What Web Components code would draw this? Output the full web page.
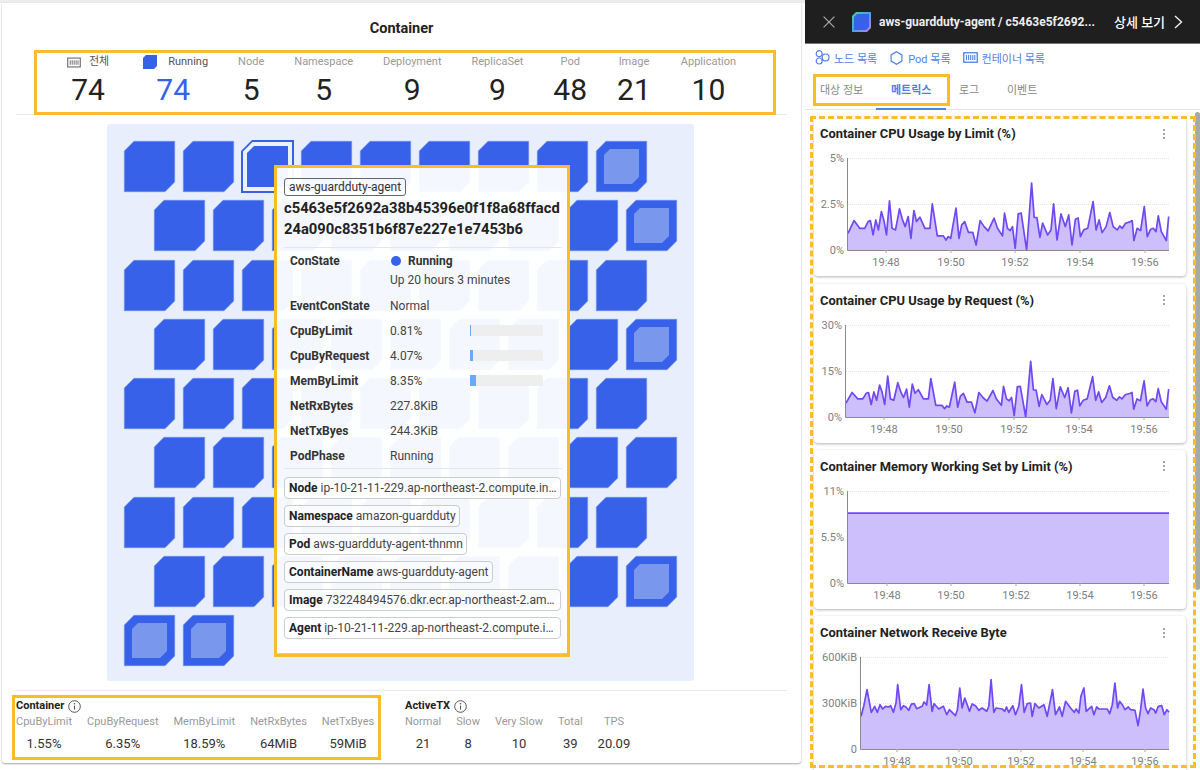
<!DOCTYPE html>
<html lang="ko">
<head>
<meta charset="utf-8">
<title>Container</title>
<style>
  html, body { margin: 0; height: 770px; overflow: hidden; background: #fff; }
  body { font-family: Roboto, "Noto Sans CJK KR", sans-serif; color: #222; display: flex; }
</style>
</head>
<body>
<overview-panel></overview-panel>
<detail-panel></detail-panel>

<script>
const ORANGE = "#fbbd27";
const BLUE = "#3661e8";

const barsIcon = (color, w = 15, h = 11) => `<svg width="${w}" height="${h}" viewBox="0 0 15 11" fill="none">
  <rect x=".75" y=".75" width="13.5" height="9.5" stroke="${color}" stroke-width="1.3"/>
  <path d="M3.5 3v5M5.6 3v5M7.7 3v5M9.8 3v5M11.8 3v5" stroke="${color}" stroke-width="1.1"/>
</svg>`;

const infoIcon = `<svg width="13" height="13" viewBox="0 0 13 13" fill="none">
  <circle cx="6.5" cy="6.5" r="5.8" stroke="#555" stroke-width="1"/>
  <path d="M6.5 5.6v4" stroke="#555" stroke-width="1.1"/><circle cx="6.5" cy="3.7" r=".8" fill="#555"/>
</svg>`;

// one stat: label on top, large number below
class StatItem extends HTMLElement {
  constructor() {
    super();
    this.attachShadow({ mode: "open" }).innerHTML = `<style>
      :host { display: flex; flex-direction: column; align-items: center; }
      .label { display: flex; align-items: center; gap: 8px; height: 14px; font-size: 11px; line-height: 14px; color: var(--label, #999); white-space: nowrap; }
      .value { font-size: 30px; line-height: 36px; margin: 3px var(--shift, 0) 0 0; color: var(--num, #222); }
    </style>
    <div class="label"><slot name="icon"></slot><slot></slot></div>
    <div class="value">${this.getAttribute("value")}</div>`;
  }
}
customElements.define("stat-item", StatItem);

// small stat used in the footer
class MiniStat extends HTMLElement {
  constructor() {
    super();
    this.attachShadow({ mode: "open" }).innerHTML = `<style>
      :host { display: flex; flex-direction: column; align-items: center; }
      .label { font-size: 11px; line-height: 14px; color: #999; white-space: nowrap; }
      .value { font-size: 13px; line-height: 16px; margin-top: 7px; color: #333; white-space: nowrap; }
    </style>
    <div class="label"><slot></slot></div>
    <div class="value">${this.getAttribute("value")}</div>`;
  }
}
customElements.define("mini-stat", MiniStat);

class HexTile extends HTMLElement {
  constructor() {
    super();
    const kind = this.getAttribute("kind") || "solid";
    let inner = "";
    if (kind === "light")
      inner = `<polygon points="14,8 43,8 43,36 36,43 8,43 8,14" fill="#7a97ee"/>`;
    if (kind === "selected")
      inner = `<polygon points="10,-1 52,-1 52,41 41,52 -1,52 -1,10" fill="${BLUE}"/>
        <polygon points="10.5,1 50,1 50,50 1,50 1,10.5" fill="#eaf1fb"/>
        <polygon points="12,5 46,5 46,46 5,46 5,12" fill="${BLUE}"/>`;
    this.attachShadow({ mode: "open" }).innerHTML = `<style>
      :host { display: block; width: 51px; height: 51px; flex: none; }
      svg { display: block; overflow: visible; }
    </style>
    <svg width="51" height="51" viewBox="0 0 51 51">
      ${kind === "selected" ? "" : `<polygon points="10,.3 50.7,.3 50.7,41 41,50.7 .3,50.7 .3,10" fill="${BLUE}" stroke="#6f8ff0" stroke-width=".6"/>`}
      ${inner}
    </svg>`;
  }
}
customElements.define("hex-tile", HexTile);

class HexMap extends HTMLElement {
  constructor() {
    super();
    const lightRows = [0, 1, 3, 7];
    let rows = "";
    for (let r = 0; r < 9; r++) {
      const count = r === 8 ? 2 : 9;
      let tiles = "";
      for (let c = 0; c < count; c++) {
        let kind = "solid";
        if (r === 0 && c === 2) kind = "selected";
        if (r === 8 || (c === 8 && lightRows.includes(r))) kind = "light";
        tiles += `<hex-tile kind="${kind}"></hex-tile>`;
      }
      rows += `<div class="row${r % 2 ? " odd" : ""}">${tiles}</div>`;
    }
    this.attachShadow({ mode: "open" }).innerHTML = `<style>
      :host { display: block; position: relative; width: 587px; height: 557px; box-sizing: border-box; padding: 17px; background: #e8eefb; border-radius: 3px; }
      .rows { display: flex; flex-direction: column; gap: 8.3px; }
      .row { display: flex; gap: 8px; }
      .odd { padding-left: 29.5px; }
      ::slotted(*) { position: absolute; left: 167px; top: 41px; }
    </style>
    <div class="rows">${rows}</div>
    <slot></slot>`;
  }
}
customElements.define("hex-map", HexMap);

class InfoChip extends HTMLElement {
  constructor() {
    super();
    this.attachShadow({ mode: "open" }).innerHTML = `<style>
      :host { display: block; width: fit-content; box-sizing: border-box; height: 22px; padding: 0 3.5px 0 4px; border: 1px solid #ccc; border-bottom-width: 1.5px; border-radius: 4px; font-size: 12px; line-height: 20px; color: #444; background: #fff8; white-space: nowrap; }
      :host([full]) { width: 277px; }
      b { color: #222; font-weight: 700; }
    </style><b>${this.getAttribute("label")}</b> <slot></slot>`;
  }
}
customElements.define("info-chip", InfoChip);

class InfoRow extends HTMLElement {
  constructor() {
    super();
    const bar = this.getAttribute("bar");
    this.attachShadow({ mode: "open" }).innerHTML = `<style>
      :host { display: flex; align-items: center; height: 25px; font-size: 12px; color: #444; padding-left: 6px; }
      .k { width: 100px; font-weight: 700; color: #333; flex: none; }
      .v { width: 80px; flex: none; }
      .bar { width: 73px; height: 11px; background: #eee; }
      .bar i { display: block; height: 100%; background: #6aa9f5; }
    </style>
    <span class="k">${this.getAttribute("label")}</span><span class="v"><slot></slot></span>
    ${bar ? `<div class="bar"><i style="width:${bar}px"></i></div>` : ""}`;
  }
}
customElements.define("info-row", InfoRow);

class NodeTooltip extends HTMLElement {
  constructor() {
    super();
    this.attachShadow({ mode: "open" }).innerHTML = `<style>
      :host { display: block; width: 296px; height: 492px; box-sizing: border-box; border: 3px solid ${ORANGE}; }
      .box { box-sizing: border-box; height: 486px; padding: 8px 5px 0 7px; background: rgba(255,255,255,.95); border-bottom: 1px solid #ccc; }
      .tag { display: inline-block; font-size: 12px; line-height: 16px; padding: 0 4px; border: 1px solid #666; border-radius: 3px; color: #333; }
      .hash { font-size: 14.75px; font-weight: 700; line-height: 21px; color: #222; margin-top: 2px; height: 42px; white-space: nowrap; }
      hr { border: 0; border-top: 1px solid #e6e6e6; margin: 0; }
      .dot { display: inline-block; width: 10px; height: 10px; border-radius: 50%; background: ${BLUE}; margin: 0 7px 0 1px; vertical-align: -1px; }
      .sub { height: 20px; font-size: 12px; line-height: 20px; color: #444; padding-left: 106px; margin-top: -3px; }
      .chips { display: flex; flex-direction: column; gap: 6px; margin-top: 8px; }
      b { color: #333; }
    </style>
    <div class="box">
      <span class="tag">aws-guardduty-agent</span>
      <div class="hash">c5463e5f2692a38b45396e0f1f8a68ffacd<br>24a090c8351b6f87e227e1e7453b6</div>
      <hr style="margin-top:7px">
      <div class="rows">
        <info-row label="ConState"><span class="dot"></span><b>Running</b></info-row>
        <div class="sub">Up 20 hours 3 minutes</div>
        <info-row label="EventConState" style="margin-top:3px">Normal</info-row>
        <info-row label="CpuByLimit" bar="1">0.81%</info-row>
        <info-row label="CpuByRequest" bar="3">4.07%</info-row>
        <info-row label="MemByLimit" bar="6">8.35%</info-row>
        <info-row label="NetRxBytes">227.8KiB</info-row>
        <info-row label="NetTxByes">244.3KiB</info-row>
        <info-row label="PodPhase">Running</info-row>
      </div>
      <hr>
      <div class="chips">
        <info-chip label="Node" full>ip-10-21-11-229.ap-northeast-2.compute.in…</info-chip>
        <info-chip label="Namespace">amazon-guardduty</info-chip>
        <info-chip label="Pod">aws-guardduty-agent-thnmn</info-chip>
        <info-chip label="ContainerName">aws-guardduty-agent</info-chip>
        <info-chip label="Image" full>732248494576.dkr.ecr.ap-northeast-2.am…</info-chip>
        <info-chip label="Agent" full>ip-10-21-11-229.ap-northeast-2.compute.i…</info-chip>
      </div>
    </div>`;
  }
}
customElements.define("node-tooltip", NodeTooltip);

class OverviewPanel extends HTMLElement {
  constructor() {
    super();
    this.attachShadow({ mode: "open" }).innerHTML = `<style>
      :host { display: block; width: 805px; flex: none; height: 770px; box-sizing: border-box; border-top: 3px solid #ececec; padding: 0 4px 7px 2px; }
      .card { height: 760px; background: #fff; box-shadow: 0 1px 2px rgba(0,0,0,.35); border-radius: 0 0 3px 3px; display: flex; flex-direction: column; }
      h1 { margin: 0; height: 47px; font-size: 14.5px; font-weight: 700; line-height: 52px; text-align: center; color: #222; }
      .summary { position: relative; width: 742px; height: 65px; box-sizing: border-box; margin-left: 32px; border: 3px solid ${ORANGE}; display: flex; justify-content: center; gap: 30px; padding: 2px 7px 0 0; }
      .first { margin-right: 4px; }
      .run { --num: ${BLUE}; --label: #555; --shift: 5px; }
      .first { --label: #555; }
      hr { border: 0; border-top: 1px solid #e9e9e9; margin: 0 14px; }
      hex-map { margin: 9px 0 0 105px; }
      .foot { display: flex; margin-top: 4px; padding-left: 10px; gap: 25px; }
      .group { height: 65px; box-sizing: border-box; border: 3px solid transparent; padding-left: 1px; }
      .group.marked { border-color: ${ORANGE}; width: 369px; }
      .group h2 { margin: 0; font-size: 11px; line-height: 16px; font-weight: 700; color: #222; display: flex; align-items: center; gap: 4px; }
      .cols { display: flex; gap: 15px; margin-top: 1px; }
    </style>
    <div class="card">
      <h1>Container</h1>
      <div class="summary">
        <stat-item class="first" value="74"><span slot="icon" style="display:flex">${barsIcon("#777", 14, 11)}</span>전체</stat-item>
        <stat-item class="run" value="74"><svg slot="icon" width="14" height="14" viewBox="0 0 14 14"><polygon points="3,0 14,0 14,11 11,14 0,14 0,3" fill="${BLUE}"/></svg><span style="margin-left:3px">Running</span></stat-item>
        <stat-item value="5">Node</stat-item>
        <stat-item value="5">Namespace</stat-item>
        <stat-item value="9">Deployment</stat-item>
        <stat-item value="9">ReplicaSet</stat-item>
        <stat-item value="48">Pod</stat-item>
        <stat-item value="21">Image</stat-item>
        <stat-item value="10">Application</stat-item>
      </div>
      <hr style="margin-top:-1px">
      <hex-map><node-tooltip></node-tooltip></hex-map>
      <hr style="margin-top:9px">
      <div class="foot">
        <div class="group marked">
          <h2>Container ${infoIcon}</h2>
          <div class="cols">
            <mini-stat value="1.55%">CpuByLimit</mini-stat>
            <mini-stat value="6.35%">CpuByRequest</mini-stat>
            <mini-stat value="18.59%">MemByLimit</mini-stat>
            <mini-stat value="64MiB">NetRxBytes</mini-stat>
            <mini-stat value="59MiB">NetTxByes</mini-stat>
          </div>
        </div>
        <div class="group" style="margin-left:-5px">
          <h2>ActiveTX ${infoIcon}</h2>
          <div class="cols">
            <mini-stat value="21">Normal</mini-stat>
            <mini-stat value="8">Slow</mini-stat>
            <mini-stat value="10">Very Slow</mini-stat>
            <mini-stat value="39">Total</mini-stat>
            <mini-stat value="20.09">TPS</mini-stat>
          </div>
        </div>
      </div>
    </div>`;
  }
}
customElements.define("overview-panel", OverviewPanel);

// series read off the reference chart, [x, y] in its own pixels
const cpu = [[145,700],[163,662],[180,685],[195,685],[205,665],[212,662],[220,705],[228,660],[236,690],[245,635],[252,660],[260,705],[269,603],[277,685],[287,690],[299,627],[308,660],[316,680],[325,650],[333,715],[342,632],[350,665],[360,652],[375,685],[390,685],[397,612],[412,708],[430,708],[438,720],[445,710],[452,715],[468,625],[477,715],[485,675],[494,665],[505,697],[518,697],[528,735],[540,662],[552,680],[564,693],[582,655],[592,685],[607,708],[613,640],[622,685],[630,692],[637,680],[645,745],[654,642],[663,640],[679,750],[694,550],[702,653],[710,653],[719,712],[727,670],[742,705],[752,690],[760,612],[770,720],[782,642],[795,680],[805,645],[815,735],[825,658],[833,654],[840,710],[850,690],[862,685],[870,645],[878,605],[887,690],[896,660],[905,698],[917,680],[928,638],[938,680],[950,690],[958,678],[965,685],[975,670],[990,665],[995,662],[1000,722],[1010,685],[1020,692],[1031,620],[1040,710],[1050,688],[1058,685],[1066,695],[1073,648],[1082,695],[1097,722],[1104,650]];
const net = [[167,590],[175,560],[185,510],[198,578],[208,560],[216,578],[224,555],[232,568],[240,560],[250,562],[256,558],[264,578],[272,550],[277,495],[286,570],[294,558],[302,562],[310,572],[318,553],[326,552],[334,567],[350,560],[356,547],[364,556],[371,495],[380,575],[386,552],[400,568],[414,560],[424,585],[432,570],[450,588],[456,570],[463,505],[470,565],[478,535],[492,575],[500,553],[510,558],[520,572],[530,565],[544,575],[550,560],[557,480],[565,578],[572,565],[590,568],[598,575],[603,562],[610,578],[622,558],[630,585],[640,560],[648,495],[656,578],[665,552],[675,550],[680,590],[688,552],[700,565],[715,555],[725,590],[741,510],[750,585],[762,562],[770,590],[780,545],[795,565],[806,578],[812,568],[820,580],[826,530],[835,505],[842,575],[858,560],[865,585],[873,562],[880,568],[905,568],[912,582],[920,555],[928,490],[936,565],[942,545],[950,555],[958,570],[968,562],[975,570],[988,572],[997,618],[1005,570],[1012,508],[1020,565],[1027,582],[1035,565],[1045,570],[1050,580],[1058,560],[1068,558],[1076,585],[1084,570],[1090,578]];

const cpuLimit = cpu.map(([x, y]) => [(x - 145) / 960, (750 - y) / 275]);
const cpuRequest = cpuLimit.map(([x, y]) => [x, y * 0.833]);
const memLimit = [[0, 0.76], [1, 0.76]];
const netRx = net.map(([x, y]) => [(x - 167) / 923, (688 - y) / 276]);

const CHARTS = {
  cpuLimit: { points: cpuLimit, axis: 34, ticks: ["5%", "2.5%", "0%"], times: [72, 137, 201, 266, 331] },
  cpuRequest: { points: cpuRequest, axis: 32, ticks: ["30%", "15%", "0%"], times: [70, 135, 200, 265, 330] },
  memLimit: { points: memLimit, axis: 34, ticks: ["11%", "5.5%", "0%"], times: [73, 137, 202, 266, 330] },
  netRx: { points: netRx, axis: 47, ticks: ["600KiB", "300KiB", "0"], times: [83, 145, 207, 269, 331] },
};
const LABELS = ["19:48", "19:50", "19:52", "19:54", "19:56"];

class MetricCard extends HTMLElement {
  constructor() {
    super();
    const c = CHARTS[this.getAttribute("series")];
    const top = 12, bottom = 104, right = 355;
    const px = ([x, y]) => `${(c.axis + x * (right - c.axis)).toFixed(1)},${(bottom - y * (bottom - top)).toFixed(1)}`;
    const line = c.points.map(px).join(" ");
    const area = `${c.axis},${bottom} ${line} ${right},${bottom}`;
    const mid = (top + bottom) / 2;
    this.attachShadow({ mode: "open" }).innerHTML = `<style>
      :host { display: block; height: 159px; background: #fff; border-radius: 4px; box-shadow: 0 1px 3px rgba(0,0,0,.3); flex: none; }
      .head { display: flex; justify-content: space-between; align-items: center; height: 29px; padding: 4px 21px 0 6px; box-sizing: border-box; }
      h3 { margin: 0; font-size: 12.9px; font-weight: 700; color: #222; }
      .dots { display: flex; flex-direction: column; gap: 2px; }
      .dots i { width: 2px; height: 2px; border-radius: 50%; background: #888; }
      svg { display: block; }
      text { font-family: Roboto, sans-serif; font-size: 11px; fill: #808080; }
    </style>
    <div class="head"><h3>${this.getAttribute("heading")}</h3><div class="dots"><i></i><i></i><i></i></div></div>
    <svg width="372" height="130" viewBox="0 0 372 130">
      <path d="M${c.axis} ${top + .5}H${right}M${c.axis} ${mid + .5}H${right}" stroke="#e6e6e6" stroke-dasharray="1 1"/>
      <polygon points="${area}" fill="#cdbffb"/>
      <polyline points="${line}" fill="none" stroke="#7048f4" stroke-width="1.7" stroke-linejoin="round"/>
      <path d="M${c.axis - .5} ${top}V${bottom + .5}H${right}" fill="none" stroke="#8a8a8a"/>
      ${c.ticks.map((t, i) => `<text x="${c.axis - 4}" y="${[top, mid, bottom][i] + 3.5}" text-anchor="end">${t}</text>`).join("")}
      ${c.times.map((x, i) => `<path d="M${x} ${bottom}v3" stroke="#aaa"/><text x="${x}" y="120" text-anchor="middle">${LABELS[i]}</text>`).join("")}
    </svg>`;
  }
}
customElements.define("metric-card", MetricCard);

class DetailPanel extends HTMLElement {
  constructor() {
    super();
    const linkBlue = "#4f80e8";
    this.attachShadow({ mode: "open" }).innerHTML = `<style>
      :host { display: flex; flex-direction: column; width: 395px; height: 770px; flex: none; background: #fff; overflow: hidden; }
      header { height: 44px; flex: none; box-sizing: border-box; background: #1f1f1f; border-bottom: 1px solid #777; display: flex; align-items: center; color: #fff; padding-left: 18px; }
      .name { font-size: 12px; font-weight: 700; width: 218px; margin-left: 8px; white-space: nowrap; color: #eee; }
      .more { font-size: 13px; font-weight: 500; margin-left: 17px; }
      nav { display: flex; height: 30px; flex: none; align-items: center; padding: 0 0 3px 10px; font-size: 11px; color: ${linkBlue}; box-sizing: border-box; }
      nav a { display: flex; align-items: center; gap: 4px; margin-right: 13px; }
      .tabs { display: flex; height: 36px; flex: none; border-bottom: 1px solid #e6e6e6; box-sizing: border-box; position: relative; font-size: 11px; color: #888; }
      .marked { position: absolute; left: 8px; top: 0; width: 137px; height: 32px; box-sizing: border-box; border: 3px solid ${ORANGE}; }
      .tabs span { position: absolute; top: 9px; line-height: 16px; }
      .on { color: ${linkBlue}; font-weight: 700; }
      .under { position: absolute; left: 71px; width: 70px; height: 2px; bottom: -1px; background: ${linkBlue}; }
      .scroll { position: relative; flex: 1; }
      .dash { position: absolute; left: 5px; top: 6px; width: 386px; height: 652px; box-sizing: border-box; border: 3px dashed ${ORANGE}; pointer-events: none; z-index: 1; }
      .thumb { position: absolute; left: 390px; top: 2px; width: 5px; height: 478px; background: #a8a8a8; border-radius: 3px; }
      .cards { display: flex; flex-direction: column; gap: 7.3px; padding: 7.4px 0 0 9px; width: 372px; }
    </style>
    <header>
      <svg width="12" height="12" viewBox="0 0 12 12"><path d="M.6.6l10.8 10.8M11.4.6L.6 11.4" stroke="#aaa" stroke-width="1.2"/></svg>
      <svg width="19" height="20" viewBox="0 0 19 20" style="margin-left:17px">
        <defs><linearGradient id="g" x1="0" y1="0" x2="1" y2="1"><stop offset="0" stop-color="#4fd08a"/><stop offset=".5" stop-color="#4aa0e8"/><stop offset="1" stop-color="#c67be8"/></linearGradient></defs>
        <polygon points="4,0 19,0 19,16 15,20 0,20 0,4" fill="url(#g)"/>
        <polygon points="5,2 17,2 17,15 14,18 2,18 2,5" fill="${BLUE}"/>
      </svg>
      <div class="name">aws-guardduty-agent / c5463e5f2692...</div>
      <span class="more">상세 보기</span>
      <svg width="9" height="14" viewBox="0 0 9 14" style="margin-left:9px"><path d="M1 1l6.5 6L1 13" fill="none" stroke="#eee" stroke-width="1.4"/></svg>
    </header>
    <nav>
      <a><svg width="15" height="15" viewBox="0 0 15 15" fill="none" stroke="${linkBlue}" stroke-width="1.2"><circle cx="4.2" cy="3.7" r="3"/><circle cx="4.2" cy="11" r="3"/><circle cx="10.6" cy="7.4" r="3.4"/></svg>노드 목록</a>
      <a style="gap:5px;margin-right:12px"><svg width="13" height="14" viewBox="0 0 13 14" fill="none" stroke="${linkBlue}" stroke-width="1.2"><path d="M6.5.8l5.4 3.1v6.2l-5.4 3.1-5.4-3.1V3.9z"/></svg>Pod 목록</a>
      <a>${barsIcon(linkBlue)}컨테이너 목록</a>
    </nav>
    <div class="tabs">
      <div class="marked"></div>
      <span style="left:15px">대상 정보</span>
      <span class="on" style="left:86px">메트릭스</span>
      <span style="left:154px">로그</span>
      <span style="left:202px">이벤트</span>
      <div class="under"></div>
    </div>
    <div class="scroll">
      <div class="thumb"></div>
      <div class="dash"></div>
      <div class="cards">
        <metric-card series="cpuLimit" heading="Container CPU Usage by Limit (%)"></metric-card>
        <metric-card series="cpuRequest" heading="Container CPU Usage by Request (%)"></metric-card>
        <metric-card series="memLimit" heading="Container Memory Working Set by Limit (%)"></metric-card>
        <metric-card series="netRx" heading="Container Network Receive Byte"></metric-card>
      </div>
    </div>`;
  }
}
customElements.define("detail-panel", DetailPanel);
</script>
</body>
</html>
